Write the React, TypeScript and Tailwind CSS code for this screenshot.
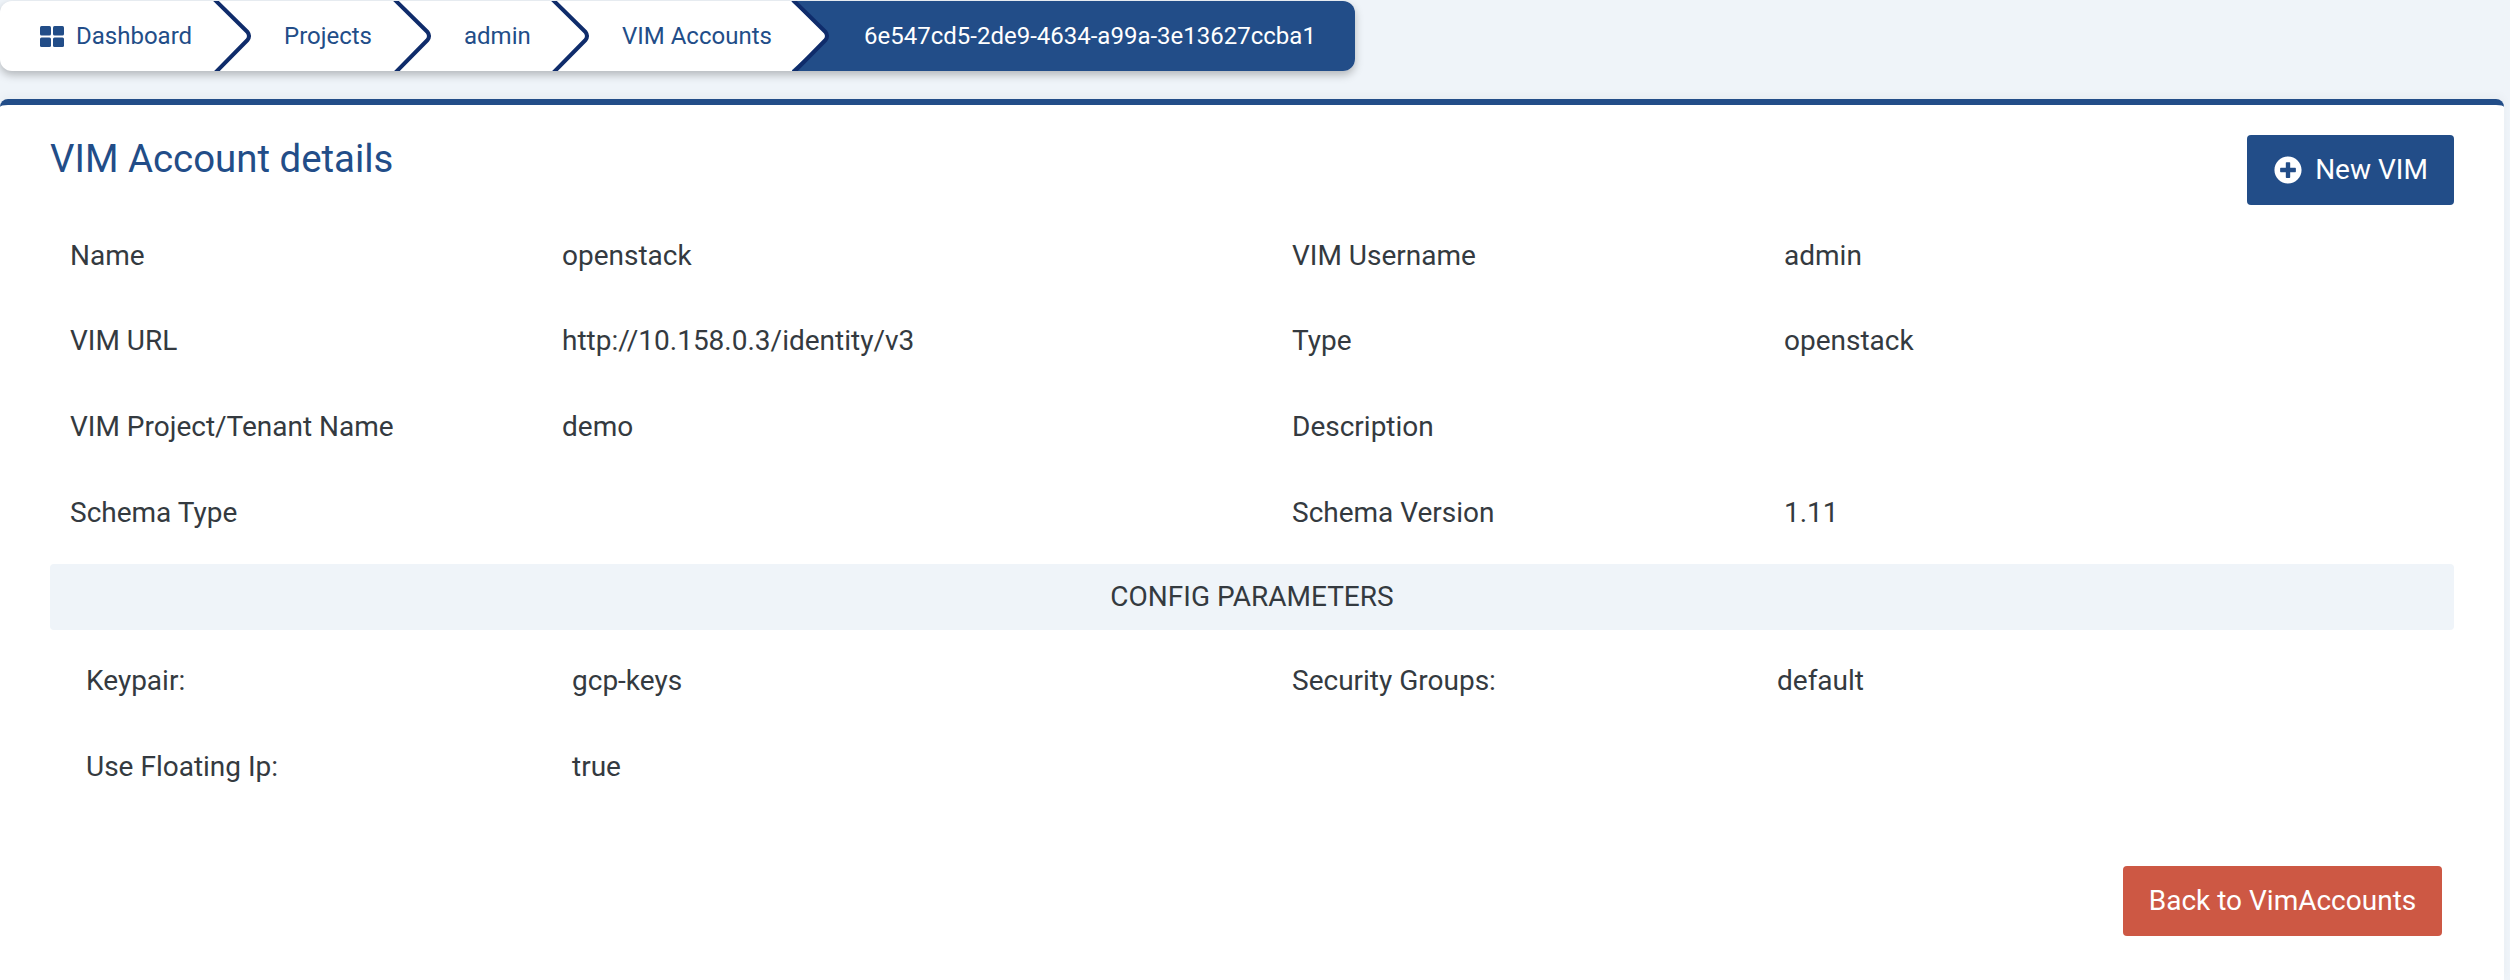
import { FaPlusCircle } from "react-icons/fa";

interface Crumb {
  label: string;
  width: string;
}

const crumbs: Crumb[] = [
  { label: "Projects", width: "w-[180px]" },
  { label: "admin", width: "w-[158px]" },
  { label: "VIM Accounts", width: "w-[240px]" },
];

const details = [
  ["Name", "openstack", "VIM Username", "admin"],
  ["VIM URL", "http://10.158.0.3/identity/v3", "Type", "openstack"],
  ["VIM Project/Tenant Name", "demo", "Description", ""],
  ["Schema Type", "", "Schema Version", "1.11"],
];

function Chevron() {
  return (
    <svg className="absolute left-full top-0 z-10 -ml-[1px]" width="42" height="70" viewBox="0 0 42 70" fill="none">
      <path d="M0 0 L35 32 Q37.5 35 35.5 38 L0 70 Z" fill="#ffffff" stroke="none" />
      <path
        d="M1 -2 L34.5 31 Q37.5 35 34.5 39 L2 72"
        stroke="#0f2c6b"
        strokeWidth="4"
        strokeLinejoin="round"
      />
    </svg>
  );
}

function DashboardIcon() {
  return (
    <svg width="24" height="21" viewBox="0 0 24 21" fill="#224d88">
      <rect x="0" y="0" width="11" height="9.5" rx="1.5" />
      <rect x="13" y="0" width="11" height="9.5" rx="1.5" />
      <rect x="0" y="11.5" width="11" height="9.5" rx="1.5" />
      <rect x="13" y="11.5" width="11" height="9.5" rx="1.5" />
    </svg>
  );
}

export default function App() {
  return (
    <div className="flex h-[980px] flex-col bg-[#eff4f9] font-['Roboto',sans-serif] text-[#343a40]">
      {/* Breadcrumb */}
      <div className="mt-[1px] flex h-[70px] w-[1355px] items-stretch rounded-xl bg-white text-[24px] text-[#224d88] shadow-[0_4px_8px_rgba(0,0,0,0.25)]">
        <div className="relative flex w-[214px] items-center gap-[12px] pl-[40px]">
          <DashboardIcon />
          <span>Dashboard</span>
          <Chevron />
        </div>
        {crumbs.map((crumb) => (
          <div key={crumb.label} className={`relative flex items-center pl-[70px] ${crumb.width}`}>
            <span>{crumb.label}</span>
            <Chevron />
          </div>
        ))}
        <div className="flex flex-1 items-center rounded-r-xl bg-[#224d88] pl-[72px] text-white">
          6e547cd5-2de9-4634-a99a-3e13627ccba1
        </div>
      </div>

      {/* Card */}
      <div className="mt-[28px] mr-[6px] flex flex-1 flex-col rounded-t-lg border-t-[6px] border-[#224d88] bg-white px-[50px] pt-[30px] shadow-[0_-4px_10px_rgba(0,0,0,0.03)]">
        <div className="flex items-start justify-between">
          <h1 className="text-[38.4px] leading-[48px] text-[#224d88]">VIM Account details</h1>
          <button className="flex h-[70px] w-[207px] items-center justify-center gap-[13px] rounded bg-[#224d88] pl-[1px] text-[28px] text-white">
            <FaPlusCircle className="h-[28px] w-[28px]" />
            New VIM
          </button>
        </div>

        <div className="mt-[8px] text-[28px]">
          {details.map((row) => (
            <div key={row[0]} className="-mx-5 grid h-[85.6px] grid-cols-2 items-center">
              <div className="flex px-10">
                <span className="w-[492px]">{row[0]}</span>
                <span>{row[1]}</span>
              </div>
              <div className="flex px-10">
                <span className="w-[492px]">{row[2]}</span>
                <span>{row[3]}</span>
              </div>
            </div>
          ))}
        </div>

        <div className="mt-[9px] flex h-[66px] items-center justify-center rounded bg-[#eff4f9] text-[28px]">
          CONFIG PARAMETERS
        </div>

        <div className="mt-[8px] text-[28px]">
          <div className="-mx-5 grid h-[85.6px] grid-cols-2 items-center">
            <div className="flex pl-[56px]">
              <span className="w-[486px]">Keypair:</span>
              <span>gcp-keys</span>
            </div>
            <div className="flex px-10">
              <span className="w-[485px]">Security Groups:</span>
              <span>default</span>
            </div>
          </div>
          <div className="-mx-5 grid h-[85.6px] grid-cols-2 items-center">
            <div className="flex pl-[56px]">
              <span className="w-[486px]">Use Floating Ip:</span>
              <span>true</span>
            </div>
          </div>
        </div>

        <div className="mt-[56px] flex justify-end pr-[12px]">
          <button className="flex h-[70px] w-[319px] items-center justify-center rounded bg-[#cd5844] text-[28px] text-white">
            Back to VimAccounts
          </button>
        </div>
      </div>
    </div>
  );
}
